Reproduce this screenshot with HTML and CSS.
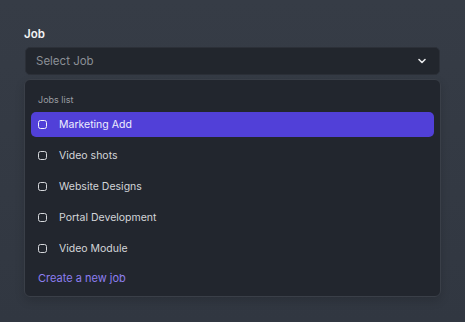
FILE: index.html
```html
<!DOCTYPE html>
<html lang="en">

<head>
    <meta charset="UTF-8">
    <meta name="viewport" content="width=device-width, initial-scale=1.0">
    <title>Job select</title>
    <link rel="stylesheet" href="styles.css">
</head>

<body>
    <main class="campo">
        <label class="rotulo">Job</label>
        <div class="seletor">
            <span>Select Job</span>
            <svg class="seta" width="10" height="10" viewBox="0 0 10 10">
                <path d="M2 3.5 L5 6.5 L8 3.5" fill="none" stroke="#e8e9eb" stroke-width="1.6" stroke-linecap="round" stroke-linejoin="round" />
            </svg>
        </div>
        <div class="lista">
            <p class="titulo">Jobs list</p>
            <div class="item ativo"><span class="caixa"></span>Marketing Add</div>
            <div class="item"><span class="caixa"></span>Video shots</div>
            <div class="item"><span class="caixa"></span>Website Designs</div>
            <div class="item"><span class="caixa"></span>Portal Development</div>
            <div class="item"><span class="caixa"></span>Video Module</div>
            <a class="novo" href="#">Create a new job</a>
        </div>
    </main>
</body>

</html>
```

FILE: styles.css
```css
body {
    margin: 0;
    height: 322px;
    background: linear-gradient(180deg, #363c46 0%, #313741 100%);
    font-family: Inter, "Noto Sans", sans-serif;
    color: #d3d5d9;
}

.campo {
    display: flex;
    flex-direction: column;
    padding: 27px 24px 0 24px;
}

.rotulo {
    font-size: 11.5px;
    font-weight: 600;
    color: #f2f3f4;
    margin-bottom: 6px;
}

.seletor {
    display: flex;
    align-items: center;
    justify-content: space-between;
    height: 28px;
    margin: 0 1px;
    padding: 0 12px 0 10px;
    background: #22262d;
    border: 1px solid #2c3038;
    border-radius: 5px;
    font-size: 11.5px;
    color: #8b8f96;
    box-sizing: border-box;
}

.lista {
    margin-top: 4px;
    background: #22262e;
    border: 1px solid #3a3f48;
    border-radius: 6px;
    padding: 14px 6px 11px 6px;
    display: flex;
    flex-direction: column;
    box-shadow: 0 4px 10px rgba(0, 0, 0, 0.15);
}

.titulo {
    margin: 0 0 7px 7px;
    font-size: 9px;
    color: #9a9da3;
}

.item {
    display: flex;
    align-items: center;
    height: 25px;
    margin-bottom: 6px;
    padding-left: 7px;
    border-radius: 5px;
    font-size: 10.5px;
    color: #d3d5d9;
}

.item.ativo {
    background: #5140d8;
    color: #eeeefe;
}

.caixa {
    width: 7px;
    height: 7px;
    border: 1.5px solid #d6d8dc;
    border-radius: 2.5px;
    margin-right: 12px;
}

.ativo .caixa {
    border-color: #f2f2fb;
}

.novo {
    margin: 4px 0 0 7px;
    font-size: 11px;
    color: #8d7ef0;
    text-decoration: none;
}
```
